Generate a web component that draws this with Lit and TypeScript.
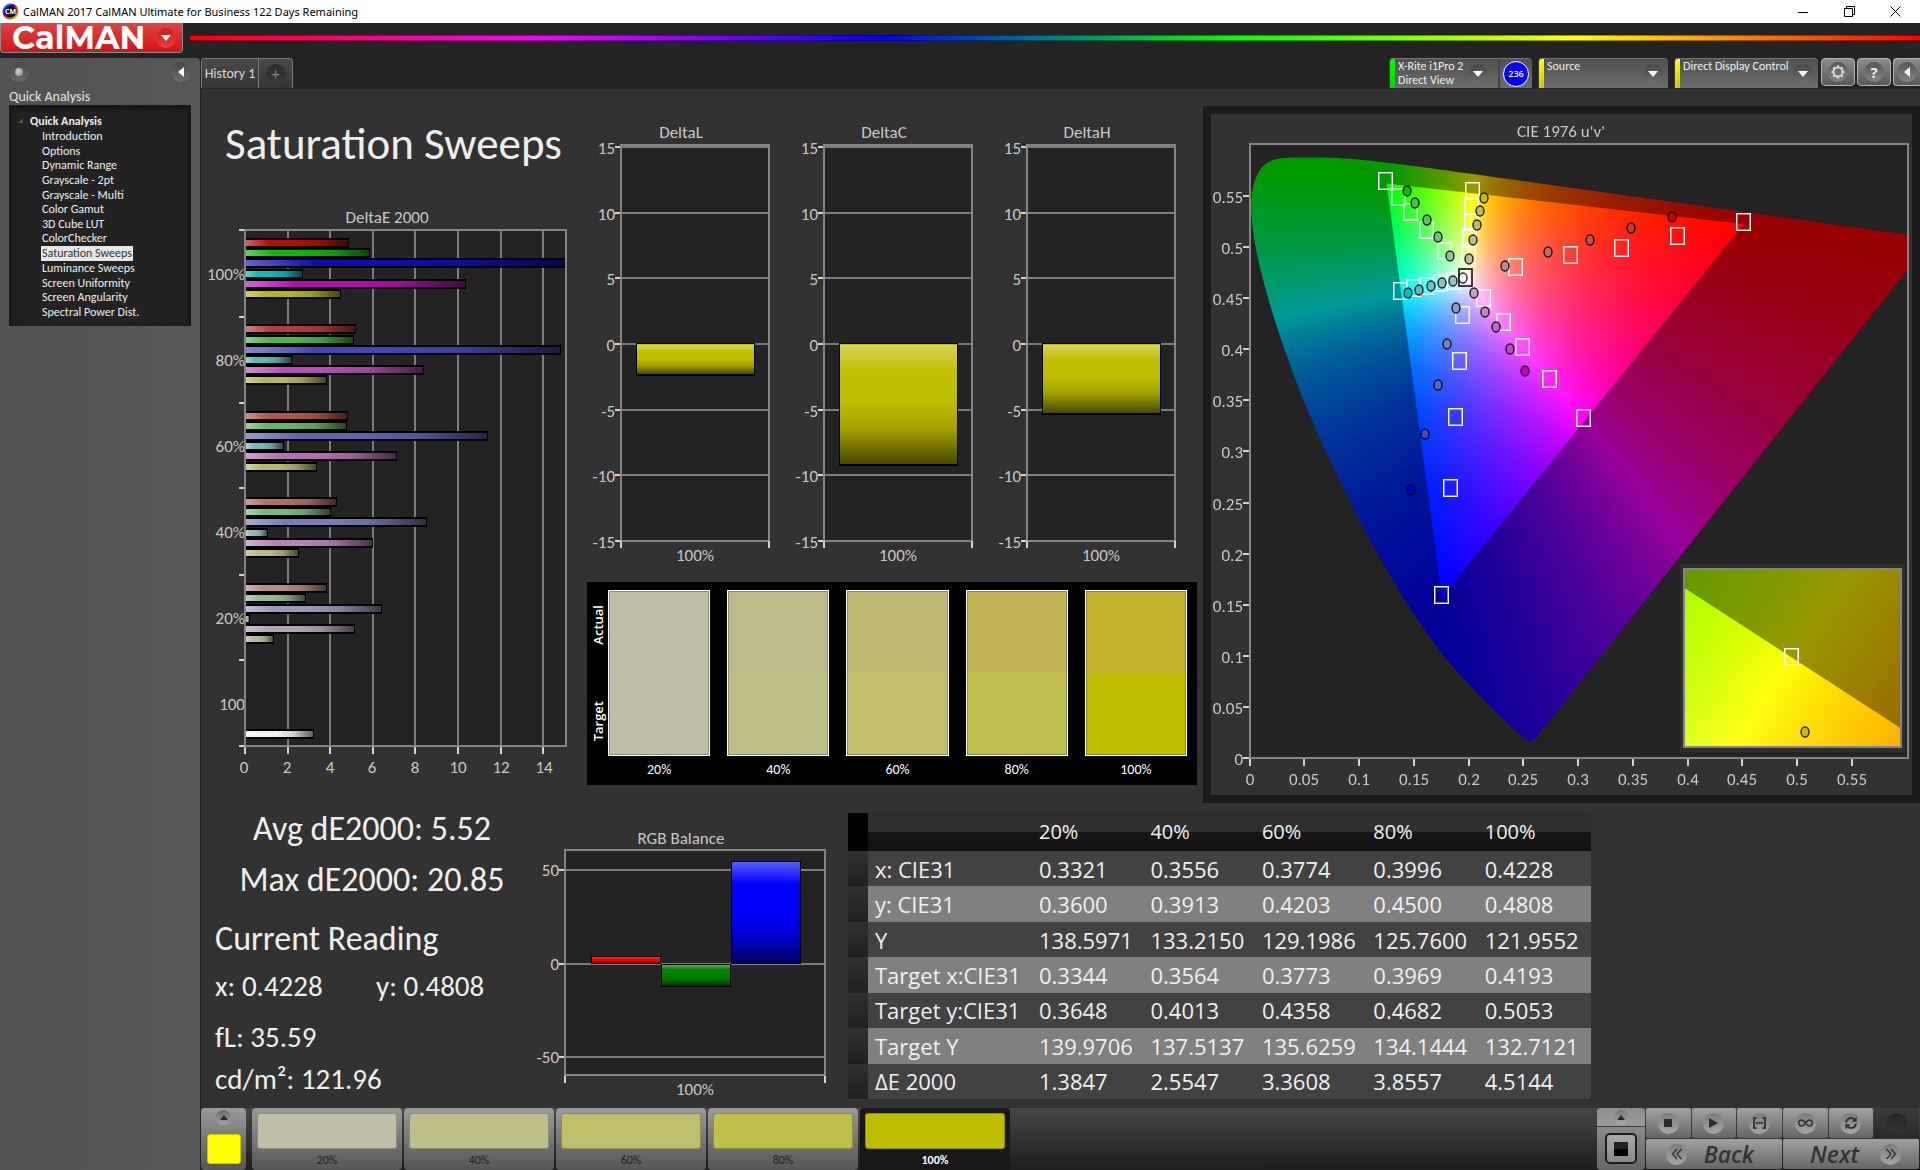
import { LitElement, html, svg, css } from "lit";
import { classMap } from "lit/directives/class-map.js";

/* ------------------------------------------------------------------ data */

const PAGES = [
  "Introduction", "Options", "Dynamic Range", "Grayscale - 2pt", "Grayscale - Multi",
  "Color Gamut", "3D Cube LUT", "ColorChecker", "Saturation Sweeps", "Luminance Sweeps",
  "Screen Uniformity", "Screen Angularity", "Spectral Power Dist.",
];

interface SweepGroup { label: string; bars: [string, number][]; }

const SWEEPS: SweepGroup[] = [
  { label: "100%", bars: [["#b90b0b", 4.87], ["#0cb90c", 5.87], ["#0c0cb9", 20.85], ["#0cb9b9", 2.71], ["#b90cb9", 10.36], ["#b9b90c", 4.51]] },
  { label: "80%", bars: [["#b93a3a", 5.2], ["#46b946", 5.1], ["#4646b9", 14.82], ["#59b9b9", 2.19], ["#b94cb9", 8.39], ["#b9b94c", 3.85]] },
  { label: "60%", bars: [["#b95252", 4.82], ["#62b962", 4.77], ["#6262b9", 11.39], ["#76b9b9", 1.82], ["#b96cb9", 7.12], ["#b9b96c", 3.36]] },
  { label: "40%", bars: [["#b96a6a", 4.3], ["#7cb97c", 4.02], ["#7c7cb9", 8.53], ["#90b9b9", 1.06], ["#b983b9", 6], ["#b9b983", 2.55]] },
  { label: "20%", bars: [["#b98a8a", 3.83], ["#98b998", 2.85], ["#9898b9", 6.42], ["#a6b6b6", 0.22], ["#b9a0b9", 5.15], ["#b9b9a0", 1.38]] },
  { label: "100", bars: [["", 0], ["", 0], ["", 0], ["", 0], ["", 0], ["", 0], ["#f4f4f4", 3.22]] },
];

const DELTAS: [string, number][] = [["DeltaL", -2.43], ["DeltaC", -9.3], ["DeltaH", -5.4]];

const SWATCHES: [string, string, string][] = [
  ["20%", "#bfbea6", "#bfbfa6"],
  ["40%", "#bfba89", "#bfbf89"],
  ["60%", "#c0b770", "#bfbf6c"],
  ["80%", "#c2b555", "#bfc04c"],
  ["100%", "#c2b22c", "#bfbf00"],
];

const COLUMNS = ["20%", "40%", "60%", "80%", "100%"];
const ROWS: [string, string[]][] = [
  ["x: CIE31", ["0.3321", "0.3556", "0.3774", "0.3996", "0.4228"]],
  ["y: CIE31", ["0.3600", "0.3913", "0.4203", "0.4500", "0.4808"]],
  ["Y", ["138.5971", "133.2150", "129.1986", "125.7600", "121.9552"]],
  ["Target x:CIE31", ["0.3344", "0.3564", "0.3773", "0.3969", "0.4193"]],
  ["Target y:CIE31", ["0.3648", "0.4013", "0.4358", "0.4682", "0.5053"]],
  ["Target Y", ["139.9706", "137.5137", "135.6259", "134.1444", "132.7121"]],
  ["ΔE 2000", ["1.3847", "2.5547", "3.3608", "3.8557", "4.5144"]],
];

/* Marker positions, in the units of the CIE drawing. */
const TARGETS: [number, number][] = [
  [1386, 181], [1399, 197], [1411, 212], [1427, 230], [1445, 251],
  [1473, 191], [1472, 206], [1472, 222], [1470, 237], [1469, 255],
  [1401, 291], [1414, 288], [1427, 286], [1441, 283], [1454, 281],
  [1484, 298], [1504, 322], [1523, 347], [1550, 379], [1584, 418],
  [1463, 315], [1460, 361], [1456, 417], [1451, 488], [1442, 595],
  [1516, 267], [1571, 255], [1622, 248], [1678, 236], [1744, 222],
];

const READINGS: [number, number, string][] = [
  [1407, 191, "#00bf00"], [1415, 203, "#46bf46"], [1427, 220, "#62bf62"], [1438, 237, "#7cbf7c"], [1450, 256, "#98bf98"],
  [1484, 198, "#bfbf00"], [1480, 211, "#bfbf4c"], [1477, 225, "#bfbf6c"], [1473, 240, "#bfbf89"], [1469, 259, "#bfbfa6"],
  [1408, 293, "#00bfbf"], [1419, 290, "#59bfbf"], [1431, 286, "#76bfbf"], [1442, 283, "#90bfbf"], [1453, 281, "#a6bfbf"],
  [1474, 293, "#bfa6bf"], [1485, 312, "#bf8abf"], [1496, 327, "#bf6cbf"], [1510, 349, "#bf4cbf"], [1525, 371, "#bf00bf"],
  [1456, 308, "#9898bf"], [1447, 344, "#7c7cbf"], [1438, 385, "#6262bf"], [1425, 434, "#4646bf"], [1411, 490, "#0000bf"],
  [1505, 266, "#bf8a8a"], [1548, 252, "#bf6a6a"], [1590, 240, "#bf5252"], [1631, 228, "#bf3a3a"], [1672, 217, "#bf0000"],
  [1463, 278, "#ffffff"],
];

const CIE = { x: 1211, y: 114, w: 701, h: 681 };
const U0 = 1249.6, V0 = 758.3, SU = 1096, SV = 1022;

/* Spectral locus as u', v' pairs, violet end first. */
const LOCUS: [number, number][] = [
  [0.2515, 0.019], [0.2347, 0.035], [0.2161, 0.0549], [0.1877, 0.0871], [0.169, 0.1119],
  [0.1441, 0.151], [0.1147, 0.2044], [0.0828, 0.2708], [0.0521, 0.3427], [0.0282, 0.4117],
  [0.0119, 0.4699], [0.0035, 0.5131], [0.0014, 0.5432], [0.0046, 0.5645], [0.0123, 0.5795],
  [0.0231, 0.586], [0.036, 0.5877], [0.0501, 0.5878], [0.0792, 0.5873], [0.1127, 0.5845],
  [0.1531, 0.5791], [0.2, 0.5722], [0.35, 0.5496], [0.6234, 0.5088], [0.2605, 0.019], [0.256, 0.016],
];

/* ------------------------------------------------------- chart utilities */

const shade = (id: string, vertical: boolean) => svg`
  <linearGradient id=${id} x1="0" y1="0" x2=${vertical ? 0 : 1} y2=${vertical ? 1 : 0}>
    <stop offset="0" stop-color="#fff" stop-opacity=".36"></stop>
    <stop offset=".22" stop-color="#fff" stop-opacity="0"></stop>
    <stop offset=".45" stop-color="#000" stop-opacity="0"></stop>
    <stop offset=".7" stop-color="#000" stop-opacity=".14"></stop>
    <stop offset="1" stop-color="#000" stop-opacity=".62"></stop>
  </linearGradient>`;

const chartText = css`
  :host { display: block; min-width: 0; }
  svg { display: block; width: 100%; height: auto; }
  text { font-family: Carlito, Calibri, Lato, sans-serif; font-size: 17px; fill: #c8c8c8; }
  .plot { fill: #232323; }
  .frame { fill: none; stroke: #848484; stroke-width: 2; }
  .grid { stroke: #7c7c7c; stroke-width: 2; }
  .tick { stroke: #d2d2d2; stroke-width: 2; }
  .bar { stroke: #000; stroke-width: 1; }
  .end { text-anchor: end; }
  .mid { text-anchor: middle; }
`;

/* --------------------------------------------------------- ΔE 2000 chart */

class DeltaEChart extends LitElement {
  static styles = chartText;

  private groups() {
    return SWEEPS.map((g, gi) => {
      const top = 238 + gi * 86.3;
      return svg`
        <text class="end" x="245" y=${280 + gi * 86}>${g.label}</text>
        ${g.bars.map(([color, value], i) => {
          if (!value) return null;
          const w = Math.min(Math.round(value * 21.3), 322);
          const y = Math.round(gi === 5 ? 729 : top + i * 10.2);
          return svg`
            <rect x="245" y=${y} width=${w} height="10" fill="#000"></rect>
            <rect x="246" y=${y + 2} width=${Math.max(w - 2, 1)} height="6" fill=${color}></rect>
            <rect x="246" y=${y + 2} width=${Math.max(w - 2, 1)} height="6" fill="url(#s)"></rect>`;
        })}`;
    });
  }

  render() {
    const xs = [0, 2, 4, 6, 8, 10, 12, 14];
    return html`<svg viewBox="201 200 374 603" role="img" aria-label="DeltaE 2000">
      <defs>${shade("s", false)}</defs>
      <text class="mid" x="387" y="223">DeltaE 2000</text>
      <rect class="plot" x="245" y="230" width="321" height="516"></rect>
      ${xs.slice(1).map((v) => svg`<line class="grid" x1=${Math.round(245 + v * 21.3)} x2=${Math.round(245 + v * 21.3)} y1="230" y2="746"></line>`)}
      ${this.groups()}
      <rect class="frame" x="245" y="230" width="321" height="516"></rect>
      ${xs.map((v) => svg`
        <line class="tick" x1=${Math.round(245 + v * 21.3)} x2=${Math.round(245 + v * 21.3)} y1="747" y2="754"></line>
        <text class="mid" x=${Math.round(244 + v * 21.4)} y="773">${v}</text>`)}
      ${[230, 317, 403, 488, 575, 660, 746].map((y) => svg`<line class="tick" x1="239" x2="244" y1=${y} y2=${y}></line>`)}
    </svg>`;
  }
}
customElements.define("delta-e-chart", DeltaEChart);

/* ---------------------------------------------------- single delta chart */

class DeltaChart extends LitElement {
  static properties = { name: { type: String }, value: { type: Number } };
  declare name: string;
  declare value: number;
  static styles = chartText;

  render() {
    const y = (v: number) => Math.round(344 - v * 13.13);
    const h = y(this.value) - 344;
    return html`<svg viewBox="0 89 203 487" role="img" aria-label=${this.name}>
      <defs>${shade("s", true)}</defs>
      <text class="mid" x="106" y="138">${this.name}</text>
      <rect class="plot" x="46" y="145" width="148" height="396"></rect>
      ${[15, 10, 5, 0, -5, -10, -15].map((v) => svg`
        <line class="grid" x1="46" x2="194" y1=${y(v)} y2=${y(v)}></line>
        <line class="tick" x1="40" x2="45" y1=${y(v)} y2=${y(v)}></line>
        <text class="end" x="40" y=${y(v) + 7}>${v}</text>`)}
      <rect class="frame" x="46" y="145" width="148" height="396"></rect>
      <rect class="bar" x="61.5" y="343.5" width="118" height=${h} fill="#bfbf00"></rect>
      <rect x="62" y="345" width="117" height=${h - 3} fill="url(#s)"></rect>
      <rect x="61" y=${342 + h} width="119" height="2"></rect>
      <line class="tick" x1="46" x2="46" y1="541" y2="548"></line>
      <line class="tick" x1="194" x2="194" y1="541" y2="548"></line>
      <text class="mid" x="120" y="561">100%</text>
    </svg>`;
  }
}
customElements.define("delta-chart", DeltaChart);

/* ------------------------------------------------------ RGB balance chart */

class RgbBalance extends LitElement {
  static styles = chartText;

  render() {
    const bars: [number, number, number, string][] = [
      [591, 956, 8, "#ff0000"], [661, 964, 23, "#008000"], [731, 861, 103, "#0000ff"],
    ];
    return html`<svg viewBox="535 803 313 305" role="img" aria-label="RGB Balance">
      <defs>${shade("s", true)}</defs>
      <text class="mid" x="681" y="844">RGB Balance</text>
      <rect class="plot" x="565" y="850" width="260" height="225"></rect>
      ${[[50, 870], [0, 964], [-50, 1057]].map(([v, y]) => svg`
        <line class="grid" x1="565" x2="825" y1=${y} y2=${y}></line>
        <line class="tick" x1="559" x2="564" y1=${y} y2=${y}></line>
        <text class="end" x="559" y=${y + 6}>${v}</text>`)}
      <rect class="frame" x="565" y="850" width="260" height="225"></rect>
      ${bars.map(([x, y, h, c]) => svg`
        <rect x=${x} y=${y} width="70" height=${h}></rect>
        <rect x=${x + 1} y=${y + 1} width="68" height=${h - 2} fill=${c}></rect>
        <rect x=${x + 1} y=${y + 1} width="68" height=${h - 2} fill="url(#s)"></rect>`)}
      <line class="tick" x1="565" x2="565" y1="1076" y2="1083"></line>
      <line class="tick" x1="825" x2="825" y1="1076" y2="1083"></line>
      <text class="mid" x="695" y="1095">100%</text>
    </svg>`;
  }
}
customElements.define("rgb-balance", RgbBalance);

/* -------------------------------------------------------------- CIE chart */

/** Fully saturated display colour for a u'v' chromaticity. */
function uvToRgb(u: number, v: number): [number, number, number] {
  const d = 6 * u - 16 * v + 12;
  const x = (9 * u) / d;
  const y = Math.max((4 * v) / d, 0.0001);
  const X = x / y;
  const Z = (1 - x - y) / y;
  const lin = [
    3.2406 * X - 1.5372 - 0.4986 * Z,
    -0.9689 * X + 1.8758 + 0.0415 * Z,
    0.0557 * X - 0.204 + 1.057 * Z,
  ].map((c) => Math.max(c, 0));
  const m = Math.max(...lin, 1e-6);
  return lin.map((c) => (255 * c) / m) as [number, number, number];
}

class CieChart extends LitElement {
  static styles = [chartText, css`
    .stack { display: grid; }
    .stack > * { grid-area: 1 / 1; width: 100%; height: 100%; display: block; }
    .target { fill: none; stroke: #fff; stroke-width: 1; }
    .soft { fill: none; stroke: #fff; stroke-opacity: .45; stroke-width: 1; }
    .reading { stroke: #000; stroke-opacity: .85; stroke-width: 1.4; }
    .white { fill: none; stroke: #000; stroke-width: 1.5; }
  `];

  private layer(w: number, h: number, k: number, map: (x: number, y: number) => [number, number]) {
    const c = document.createElement("canvas");
    c.width = w;
    c.height = h;
    const g = c.getContext("2d")!;
    const img = g.createImageData(w, h);
    for (let y = 0, i = 0; y < h; y++) {
      for (let x = 0; x < w; x++, i += 4) {
        const [u, v] = map(x, y);
        const rgb = uvToRgb(u, v);
        img.data[i] = rgb[0] * k;
        img.data[i + 1] = rgb[1] * k;
        img.data[i + 2] = rgb[2] * k;
        img.data[i + 3] = 255;
      }
    }
    g.putImageData(img, 0, 0);
    return c;
  }

  firstUpdated() {
    const g = this.renderRoot.querySelector("canvas")!.getContext("2d")!;
    const px = (u: number, v: number): [number, number] => [U0 - CIE.x + u * SU, V0 - CIE.y - v * SV];
    const map = (x: number, y: number): [number, number] => [(x + CIE.x - U0) / SU, (V0 - y - CIE.y) / SV];

    g.fillStyle = "#232323";
    g.fillRect(39, 30, 657, 613);

    const locus = new Path2D();
    LOCUS.forEach(([u, v], i) => {
      const [x, y] = px(u, v);
      const prev = LOCUS[Math.max(i - 1, 0)];
      if (i === 0) locus.moveTo(x, y);
      else {
        const a = px(LOCUS[Math.max(i - 2, 0)][0], LOCUS[Math.max(i - 2, 0)][1]);
        const b = px(prev[0], prev[1]);
        const n = px(LOCUS[Math.min(i + 1, LOCUS.length - 1)][0], LOCUS[Math.min(i + 1, LOCUS.length - 1)][1]);
        if (i < 22) locus.bezierCurveTo(b[0] + (x - a[0]) / 6, b[1] + (y - a[1]) / 6, x - (n[0] - b[0]) / 6, y - (n[1] - b[1]) / 6, x, y);
        else locus.lineTo(x, y);
      }
    });
    locus.closePath();

    const gamut = new Path2D();
    gamut.moveTo(...px(0.4507, 0.5229));
    gamut.lineTo(...px(0.125, 0.5625));
    gamut.lineTo(...px(0.1754, 0.1579));
    gamut.closePath();

    g.save();
    g.beginPath();
    g.rect(39, 30, 657, 613);
    g.clip();
    g.save();
    g.clip(locus);
    g.drawImage(this.layer(CIE.w, CIE.h, 0.6, map), 0, 0);
    g.restore();
    g.save();
    g.clip(gamut);
    g.drawImage(this.layer(CIE.w, CIE.h, 1, map), 0, 0);
    g.restore();
    g.restore();

    /* Magnified view round the selected target: one axis runs along the
       gamut edge, the other from yellow towards the white point. */
    const ix = 1683 - CIE.x, iy = 568 - CIE.y, iw = 219, ih = 180;
    const zoom = (x: number, y: number): [number, number] => {
      const dx = x - 109, dy = y - 89;
      const a = (88 * dx + 59 * dy) / 27591;
      const b = (219 * dy - 141 * dx) / 27591;
      return [0.2039 + a * 0.044 - b * 0.0008, 0.5529 - a * 0.00535 - b * 0.0105];
    };
    g.fillStyle = "#2e2e2e";
    g.fillRect(ix - 3, iy - 4, iw + 6, ih + 8);
    g.drawImage(this.layer(iw, ih, 0.6, zoom), ix, iy);
    g.save();
    g.beginPath();
    g.moveTo(ix, iy + 19);
    g.lineTo(ix + iw, iy + 161);
    g.lineTo(ix + iw, iy + ih);
    g.lineTo(ix, iy + ih);
    g.closePath();
    g.clip();
    g.drawImage(this.layer(iw, ih, 1, zoom), ix, iy);
    g.restore();
  }

  private square([x, y]: [number, number]) {
    return svg`
      <rect class="target" x=${x - 7.5} y=${y - 8.5} width="14" height="17"></rect>
      <rect class="soft" x=${x - 6.5} y=${y - 7.5} width="12" height="15"></rect>`;
  }

  render() {
    const us = ["0", "0.05", "0.1", "0.15", "0.2", "0.25", "0.3", "0.35", "0.4", "0.45", "0.5", "0.55"];
    return html`<div class="stack">
      <canvas width=${CIE.w} height=${CIE.h}></canvas>
      <svg viewBox="${CIE.x} ${CIE.y} ${CIE.w} ${CIE.h}" role="img" aria-label="CIE 1976 u'v'">
        <text class="mid" x="1561" y="137">CIE 1976 u'v'</text>
        <rect class="frame" x="1250" y="144" width="658" height="614"></rect>
        ${us.map((t, i) => {
          const x = Math.round(U0 + i * 54.75);
          const y = Math.round(V0 - i * 51.15);
          return svg`
            <line class="tick" x1=${x} x2=${x} y1="759" y2="766"></line>
            <text class="mid" x=${x} y="785">${t}</text>
            <line class="tick" x1="1243" x2="1249" y1=${y} y2=${y}></line>
            <text class="end" x="1243" y=${y + 7}>${t}</text>`;
        })}
        ${TARGETS.map((t) => this.square(t))}
        <rect class="white" x="1459" y="269" width="13" height="17"></rect>
        ${READINGS.map(([x, y, c]) => svg`<ellipse class="reading" cx=${x} cy=${y} rx="4" ry="5" fill=${c}></ellipse>`)}
        <rect class="frame" x="1684" y="569" width="217" height="178"></rect>
        ${this.square([1792, 657])}
        <ellipse class="reading" cx="1805" cy="732" rx="4" ry="5" fill="#bfbf00"></ellipse>
      </svg>
    </div>`;
  }
}
customElements.define("cie-chart", CieChart);

/* ------------------------------------------------------------------ icons */

const icon = (w: number, h: number, body: unknown) =>
  html`<svg class="ico" width=${w} height=${h} viewBox="0 0 ${w} ${h}" aria-hidden="true">${body}</svg>`;

const I = {
  down: icon(10, 6, svg`<path d="M0 0h10L5 6z" fill="#fff"></path>`),
  left: icon(6, 10, svg`<path d="M6 0v10L0 5z" fill="#fff"></path>`),
  upDark: icon(8, 5, svg`<path d="M0 5h8L4 0z" fill="#2c2c2c"></path>`),
  gear: icon(16, 16, svg`<g fill="none" stroke="#d8d8d8"><circle cx="8" cy="8" r="4.4" stroke-width="1.8"></circle>
    <path d="M8 1.500v2M8 12.500v2M1.500 8h2M12.500 8h2M3.400 3.400l1.400 1.400M11.200 11.200l1.400 1.400M3.400 12.600l1.400-1.400M11.200 4.800l1.400-1.400" stroke-width="2.600"></path></g>`),
  stop: icon(8, 8, svg`<path d="M0 0h8v8H0z" fill="#2c2c2c"></path>`),
  play: icon(9, 10, svg`<path d="M0 0l9 5-9 5z" fill="#2c2c2c"></path>`),
  step: icon(13, 12, svg`<path d="M3.500 1H1v10h2.500M9.500 1H12v10H9.500" fill="none" stroke="#333" stroke-width="1.800"></path><path d="M3 5h2v2H3zM5.500 5h2v2h-2zM8 5h2v2H8z" fill="#333"></path>`),
  loop: icon(15, 8, svg`<path d="M7.500 4C6 1.800 5 1 3.700 1a3 3 0 0 0 0 6C5 7 6 6.200 7.500 4S10 1 11.300 1a3 3 0 0 1 0 6C10 7 9 6.200 7.500 4z" fill="none" stroke="#333" stroke-width="1.600"></path>`),
  refresh: icon(14, 14, svg`<g fill="none" stroke="#333" stroke-width="2"><path d="M2 6.500A5 5 0 0 1 10.500 3.500"></path><path d="M12 7.500A5 5 0 0 1 3.500 10.500"></path></g><path d="M12.800.600v5.200H7.600zM1.200 13.400V8.200h5.200z" fill="#333"></path>`),
  back: icon(12, 12, svg`<path d="M6 1L1.500 6 6 11M10.500 1L6 6l4.500 5" fill="none" stroke="#333" stroke-width="1.500"></path>`),
  next: icon(12, 12, svg`<path d="M6 1l4.500 5L6 11M1.500 1L6 6l-4.500 5" fill="none" stroke="#333" stroke-width="1.500"></path>`),
};

/* -------------------------------------------------------------------- app */

class AppRoot extends LitElement {
  static styles = css`
    :host {
      display: flex; flex-direction: column; min-height: 100vh; box-sizing: border-box;
      background: #232323; color: #eee; overflow: hidden;
      font-family: Carlito, Calibri, Lato, sans-serif; font-size: 14px;
    }
    * { box-sizing: border-box; }
    button { font: inherit; color: inherit; border: 0; padding: 0; margin: 0; background: none; cursor: pointer; }
    a { color: inherit; text-decoration: none; }
    h1, h2, p, ul { margin: 0; padding: 0; list-style: none; font-weight: 400; }
    .ico { display: block; }

    .titlebar { display: flex; align-items: center; height: 23px; background: #fff; color: #000;
      font: 11px/23px "Noto Sans", "Open Sans", sans-serif; padding: 0 2px; }
    .titlebar .name { margin-left: 4px; flex: 1; }
    .titlebar button { width: 46px; height: 23px; display: grid; place-items: center; }

    .brandrow { display: flex; height: 35px; }
    .brand { width: 183px; height: 30px; display: flex; align-items: center; justify-content: space-between;
      padding: 0 6px 0 11px; background: linear-gradient(#e04444, #d01414);
      border: solid #8c8c8c; border-width: 0 1px 1px 1px; border-radius: 0 0 4px 4px; color: #fff; }
    .brand .word { font: 700 32px/30px Montserrat, Nunito, Lato, sans-serif; }
    .brand .drop { width: 20px; height: 20px; border-radius: 50%; display: grid; place-items: center; background: linear-gradient(#cc1c1c, #e64040); }
    .rainbow { flex: 1; height: 6px; margin: 12px 0 0 7px; border: solid rgba(0, 0, 0, .4); border-width: 1px 0;
      background: linear-gradient(90deg, #f00, #f0f 20%, #00f 40%, #0f0 60%, #ff0 80%, #f00); }

    .body { display: flex; flex: 1; min-height: 0; }
    aside { width: 200px; flex: none; background: linear-gradient(90deg, #525252, #585858); padding: 0 9px; border-radius: 0 4px 0 0; }
    .sidetools { display: flex; justify-content: space-between; padding-top: 4px; height: 31px; }
    .round { width: 20px; height: 20px; border-radius: 50%; display: grid; place-items: center; background: linear-gradient(#474747, #6e6e6e); }
    .knob { background: linear-gradient(#4a4a4a, #686868); }
    .knob::after { content: ""; width: 8px; height: 8px; border-radius: 50%; background: radial-gradient(circle at 40% 40%, #ccc, #888); }
    aside h2 { font-size: 14px; line-height: 16px; color: #e4e4e4; }
    .tree { height: 221px; background: #222; border: 1px solid #1a1a1a; box-shadow: inset 0 2px 6px #111;
      padding: 6px 0 0 8px; font-size: 12px; }
    .root { display: flex; align-items: center; gap: 7px; font-weight: 700; line-height: 16px; height: 17px; }
    .root .tw { display: block; width: 0; height: 0; border: solid transparent; border-width: 0 0 5px 5px; border-bottom-color: #555; }
    .tree ul { display: grid; grid-auto-rows: 1fr; height: 190px; padding-left: 23px; }
    .tree li { display: flex; align-items: center; }
    .tree a { padding: 0 1px; line-height: 14px; white-space: nowrap; }
    .tree a.on { background: #e6e6e6; color: #333; line-height: 15px; }

    .stage { flex: 1; min-width: 0; padding-left: 1px; }
    .tabs { display: flex; height: 30px; }
    .tab { height: 30px; border: 1px solid #7c7c7c; border-bottom: 0; background: linear-gradient(#4a4a4a, #353535); color: #d8d8d8; }
    .tab.first { width: 58px; border-radius: 4px 0 0 0; }
    .tab.add { width: 34px; border-left: 0; border-radius: 0 4px 0 0; display: grid; place-items: center; }
    .tab.add span { width: 20px; height: 20px; border-radius: 50%; background: linear-gradient(#2a2a2a, #3c3c3c); color: #888; line-height: 19px; font-size: 16px; }
    .devices { margin-left: auto; display: flex; }
    .dev { height: 30px; display: flex; align-items: flex-start; background: linear-gradient(#505050, #6c6c6c); color: #eee;
      border-radius: 4px 4px 0 0; border-top: 1px solid #777; border-left: 1px solid #3c3c3c; text-align: left; font-size: 12px; line-height: 14px; margin-right: 6px; overflow: hidden; }
    .dev::before { content: ""; width: 5px; align-self: stretch; background: linear-gradient(#ff0, #d0c800); margin-right: 3px; }
    .dev.meter::before { background: linear-gradient(#0f0, #00d800); }
    .dev .txt { flex: 1; white-space: nowrap; }
    .dev .round { margin: 5px 5px 0 0; }
    .meter { width: 143px; }
    .source { width: 130px; }
    .ddc { width: 144px; margin-right: 3px; }
    .meter .round { margin-right: 10px; }
    .meter .badgebox { border-left: 2px solid #444; align-self: stretch; width: 34px; display: grid; place-items: center; }
    .badge { width: 26px; height: 26px; border: 1px solid #fff; border-radius: 50%; background: #00f; color: #fff;
      font: 600 9px/24px "Open Sans", sans-serif; text-align: center; }
    .tool { width: 34px; height: 28px; margin-right: 2px; border: 1px solid #b4b4b4; border-radius: 4px; background: linear-gradient(#8c8c8c, #5a5a5a); display: grid; place-items: center; }
    .tool.edge { width: 27px; margin-right: 0; border-right: 0; border-radius: 4px 0 0 4px; }
    .tool .round { font: 700 15px/20px "Open Sans", sans-serif; color: #eee; background: linear-gradient(#555, #858585); }

    .work { background: #323232; border-top: 1px solid #282828; }
    .top { display: grid; grid-template-columns: 374fr 628fr 717fr; align-items: start; }
    h1 { font-size: 45px; line-height: 64px; height: 111px; padding: 23px 0 0 24px; color: #eee; white-space: nowrap; }
    .trio { display: grid; grid-template-columns: repeat(3, 1fr); padding-right: 19px; }
    .swatches { display: grid; grid-template-columns: 21px 1fr; background: #000; margin: 6px 6px 0 12px; padding: 8px 10px 0 0; height: 203px; color: #fff; }
    .side { display: flex; flex-direction: column; justify-content: space-between; align-items: center; padding: 15px 0; height: 166px; }
    .side span { writing-mode: vertical-rl; transform: rotate(180deg); font: 600 13px/18px "Open Sans", sans-serif; }
    .chips { display: grid; grid-template-columns: repeat(5, 1fr); column-gap: 17px; }
    .sw { text-align: center; font-size: 14px; line-height: 28px; }
    .chip { height: 166px; border: 1px solid #fff; outline: 1px solid rgba(90, 90, 60, .5); outline-offset: -2px; display: grid; grid-template-rows: 1fr 1fr; }
    .cie { margin-top: 17px; border: 8px solid #1b1b1b; background: #323232; }

    .bottom { display: grid; grid-template-columns: 334fr 313fr 743fr 329fr; align-items: start; }
    .vals { padding: 5px 0 0 14px; font-size: 34px; line-height: 42px; white-space: nowrap; color: #eee; }
    .vals .c { text-align: center; margin-right: 6px; }
    .vals .c + .c { margin-top: 9px; }
    .vals h2 { font-size: 34px; margin-top: 17px; }
    .vals .s { font-size: 29px; line-height: 34px; }
    .vals .xy { display: grid; grid-template-columns: 161px 1fr; margin-top: 9px; }
    .vals .fl { margin-top: 17px; }
    .vals .cd { margin-top: 8px; }

    table { border-collapse: collapse; width: 100%; height: 286px; margin-top: 10px; table-layout: fixed;
      font: 22px/26px "Open Sans", "Noto Sans", sans-serif; color: #f0f0f0; text-align: left; }
    th, td { padding: 0; font-weight: 400; white-space: nowrap; }
    col.grip { width: 20px; }
    col.lab { width: 171px; }
    col.num { width: 15%; }
    thead tr { height: 38px; background: linear-gradient(#2e2e2e, #303030 50%, #161616 50%, #121212); }
    thead th { font-weight: 500; font-size: 20px; }
    thead td.grip { background: #000; }
    tbody tr { height: 35px; background: #424242; }
    tbody tr:nth-child(even) { background: #808080; }
    tbody td.grip { background: linear-gradient(#303030, #202020); }
    tbody th { padding-left: 7px; }

    .strip { display: flex; height: 62px; background: linear-gradient(#464646, #1e1e1e); }
    .cur { width: 45px; margin-right: 6px; border-radius: 4px; background: linear-gradient(#9a9a9a, #555); display: flex; flex-direction: column; align-items: center; justify-content: space-between; padding: 2px 0 6px; }
    .cur .up { width: 15px; height: 15px; border-radius: 50%; background: linear-gradient(#6a6a6a, #a4a4a4); display: grid; place-items: center; }
    .cur .now { width: 34px; height: 30px; border-radius: 3px; background: #ff0; border: 1px solid #c8c800; }
    .patch { width: 150px; margin-right: 2px; border-radius: 4px; background: linear-gradient(#9a9a9a, #555); padding: 5px 5px 0; color: #222; font-size: 12px; line-height: 22px; text-align: center; }
    .patch .col { display: block; height: 36px; border-radius: 3px; border: 1px solid rgba(0, 0, 0, .25); }
    .patch.on { background: #191717; color: #fff; font-weight: 700; }
    .transport { margin-left: auto; display: grid; grid-template-columns: 48px 1fr; width: 323px; gap: 1px; }
    .stopcol { display: grid; grid-template-rows: 18px 1fr; gap: 1px; }
    .stopcol button { background: linear-gradient(#8e8e8e, #9a9a9a); border-radius: 4px 4px 0 0; display: grid; place-items: center; }
    .stopcol .big { background: linear-gradient(#8a8a8a, #666); border-radius: 0 0 4px 4px; }
    .stopcol .cap { width: 15px; height: 15px; border-radius: 50%; background: linear-gradient(#777, #aaa); display: grid; place-items: center; }
    .stopcol .ring { width: 32px; height: 31px; border: 2px solid #1c1c1c; border-radius: 5px; background: linear-gradient(#aaa, #888); display: grid; place-items: center; }
    .stopcol .ring::after { content: ""; width: 14px; height: 14px; background: linear-gradient(#222 50%, #000 50%); }
    .ctl { display: grid; grid-template-columns: repeat(6, 1fr); grid-template-rows: 30px 30px; gap: 1px; padding-right: 1px; }
    .ctl button { background: linear-gradient(#a2a2a2, #656565); display: grid; place-items: center; border-radius: 2px; }
    .ctl .disc { width: 21px; height: 21px; border-radius: 50%; display: grid; place-items: center; background: linear-gradient(#7c7c7c, #a6a6a6); }
    .ctl .off { background: linear-gradient(#3c3c3c, #2a2a2a); }
    .ctl .off .disc { background: linear-gradient(#252525, #333); }
    .ctl .nav { grid-column: span 3; display: flex; align-items: center; justify-content: space-between; color: #333;
      font: italic 600 23px/30px "Open Sans", sans-serif; padding: 0 28px 0 20px; }
    .ctl .nav.fwd { padding: 0 18px 0 27px; }
  `;

  render() {
    return html`
      <header class="titlebar">
        <svg class="ico" width="17" height="17" viewBox="0 0 17 17" aria-hidden="true">
          <defs><linearGradient id="w" x1="0" x2="1" y1="0" y2="1">
            <stop offset="0" stop-color="#0cf"></stop><stop offset=".35" stop-color="#40f"></stop>
            <stop offset=".6" stop-color="#f22"></stop><stop offset="1" stop-color="#9e0"></stop></linearGradient></defs>
          <circle cx="8.5" cy="8.5" r="7" fill="#111" stroke="url(#w)" stroke-width="2"></circle>
          <text x="8.5" y="11" text-anchor="middle" font-family="Open Sans, sans-serif" font-weight="700" font-size="7" fill="#fff">CM</text>
        </svg>
        <span class="name">CalMAN 2017 CalMAN Ultimate for Business 122 Days Remaining</span>
        <button aria-label="Minimize">${icon(10, 10, svg`<path d="M0 5.500h10" stroke="#000"></path>`)}</button>
        <button aria-label="Restore">${icon(11, 11, svg`<path d="M.5 2.500h8v8h-8zM2.500 2.500v-2h8v8h-2" fill="none" stroke="#000"></path>`)}</button>
        <button aria-label="Close">${icon(11, 11, svg`<path d="M.5.5l10 10M10.500.500l-10 10" stroke="#000"></path>`)}</button>
      </header>

      <div class="brandrow">
        <button class="brand"><span class="word">CalMAN</span><span class="drop">${I.down}</span></button>
        <div class="rainbow"></div>
      </div>

      <div class="body">
        <aside>
          <div class="sidetools">
            <button class="round knob" aria-label="Pin"></button>
            <button class="round" aria-label="Collapse">${I.left}</button>
          </div>
          <h2>Quick Analysis</h2>
          <nav class="tree">
            <div class="root"><span class="tw"></span>Quick Analysis</div>
            <ul>${PAGES.map((p) => html`<li><a href="#" class=${classMap({ on: p === "Saturation Sweeps" })}>${p}</a></li>`)}</ul>
          </nav>
        </aside>

        <main class="stage">
          <div class="tabs">
            <button class="tab first">History 1</button>
            <button class="tab add" aria-label="Add history"><span>+</span></button>
            <div class="devices">
              <button class="dev meter"><span class="txt">X-Rite i1Pro 2<br>Direct View</span><span class="round">${I.down}</span>
                <span class="badgebox"><span class="badge">236</span></span></button>
              <button class="dev source"><span class="txt">Source</span><span class="round">${I.down}</span></button>
              <button class="dev ddc"><span class="txt">Direct Display Control</span><span class="round">${I.down}</span></button>
              <button class="tool" aria-label="Settings"><span class="round">${I.gear}</span></button>
              <button class="tool" aria-label="Help"><span class="round">?</span></button>
              <button class="tool edge" aria-label="Hide"><span class="round">${I.left}</span></button>
            </div>
          </div>

          <div class="work">
            <div class="top">
              <section>
                <h1>Saturation Sweeps</h1>
                <delta-e-chart></delta-e-chart>
              </section>
              <section>
                <div class="trio">${DELTAS.map(([n, v]) => html`<delta-chart name=${n} .value=${v}></delta-chart>`)}</div>
                <div class="swatches">
                  <div class="side"><span>Actual</span><span>Target</span></div>
                  <div class="chips">${SWATCHES.map(([l, a, t]) => html`<div class="sw">
                    <div class="chip"><div style="background:${a}"></div><div style="background:${t}"></div></div>${l}</div>`)}</div>
                </div>
              </section>
              <section class="cie"><cie-chart></cie-chart></section>
            </div>

            <div class="bottom">
              <section class="vals">
                <p class="c">Avg dE2000: 5.52</p>
                <p class="c">Max dE2000: 20.85</p>
                <h2>Current Reading</h2>
                <p class="s xy"><span>x: 0.4228</span><span>y: 0.4808</span></p>
                <p class="s fl">fL: 35.59</p>
                <p class="s cd">cd/m²: 121.96</p>
              </section>
              <rgb-balance></rgb-balance>
              <table>
                <colgroup><col class="grip"><col class="lab"><col class="num" span="4"><col></colgroup>
                <thead><tr><td class="grip"></td><td></td>${COLUMNS.map((c) => html`<th scope="col">${c}</th>`)}</tr></thead>
                <tbody>${ROWS.map(([l, vs]) => html`<tr><td class="grip"></td><th scope="row">${l}</th>${vs.map((v) => html`<td>${v}</td>`)}</tr>`)}</tbody>
              </table>
            </div>
          </div>

          <footer class="strip">
            <button class="cur" aria-label="Current patch"><span class="up">${I.upDark}</span><span class="now"></span></button>
            ${SWATCHES.map(([l, , t]) => html`<button class=${classMap({ patch: true, on: l === "100%" })}>
              <span class="col" style="background:${t}"></span>${l}</button>`)}
            <div class="transport">
              <div class="stopcol">
                <button aria-label="Expand"><span class="cap">${I.upDark}</span></button>
                <button class="big" aria-label="Stop all"><span class="ring"></span></button>
              </div>
              <div class="ctl">
                <button aria-label="Stop"><span class="disc">${I.stop}</span></button>
                <button aria-label="Play"><span class="disc">${I.play}</span></button>
                <button aria-label="Read series"><span class="disc">${I.step}</span></button>
                <button aria-label="Continuous"><span class="disc">${I.loop}</span></button>
                <button aria-label="Refresh"><span class="disc">${I.refresh}</span></button>
                <button class="off" aria-label="Record"><span class="disc"></span></button>
                <button class="nav"><span class="disc">${I.back}</span>Back</button>
                <button class="nav fwd">Next<span class="disc">${I.next}</span></button>
              </div>
            </div>
          </footer>
        </main>
      </div>
    `;
  }
}
customElements.define("app-root", AppRoot);
